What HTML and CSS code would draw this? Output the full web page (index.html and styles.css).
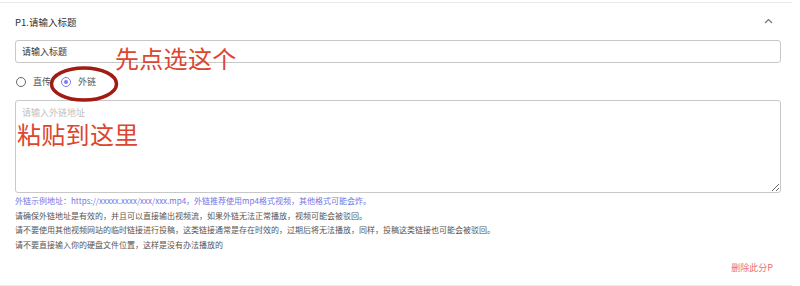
FILE: index.html
```html
<!DOCTYPE html>
<html lang="zh-CN">
<head>
<meta charset="utf-8">
<title>P1</title>
<link rel="stylesheet" href="styles.css">
</head>
<body>
<div class="panel">
  <div class="header">
    <span class="title">P1.请输入标题</span>
    <svg class="chevron" width="9" height="6" viewBox="0 0 9 6"><polyline points="1,5 4.5,1.5 8,5" fill="none" stroke="#777" stroke-width="1.2"/></svg>
  </div>
  <div class="body">
    <input class="field" type="text" value="请输入标题">
    <div class="radios">
      <label class="radio"><span class="dot"></span><span class="rlabel">直传</span></label>
      <label class="radio checked"><span class="dot"></span><span class="rlabel">外链</span></label>
    </div>
    <textarea class="area" placeholder="请输入外链地址"></textarea>
    <div class="help">
      <p class="tip">外链示例地址：https://xxxxx.xxxx/xxx/xxx.mp4，外链推荐使用mp4格式视频，其他格式可能会炸。</p>
      <p>请确保外链地址是有效的，并且可以直接输出视频流，如果外链无法正常播放，视频可能会被驳回。</p>
      <p>请不要使用其他视频网站的临时链接进行投稿，这类链接通常是存在时效的，过期后将无法播放，同样，投稿这类链接也可能会被驳回。</p>
      <p>请不要直接输入你的硬盘文件位置，这样是没有办法播放的</p>
    </div>
    <div class="footer"><span class="del">删除此分P</span></div>
  </div>
  <div class="note note1">先点选这个</div>
  <div class="note note2">粘贴到这里</div>
  <svg class="ring" width="72" height="40" viewBox="0 0 72 40"><ellipse cx="36" cy="20" rx="32.5" ry="16" fill="none" stroke="#a11b12" stroke-width="3.5"/></svg>
</div>
</body>
</html>
```
FILE: styles.css
```css
* { box-sizing: border-box; }
html, body { margin: 0; padding: 0; background: #fff; }
body {
  font-family: "Noto Sans CJK SC", "Noto Sans", sans-serif;
  color: #333;
  width: 800px;
  height: 286px;
  overflow: hidden;
}
.panel {
  position: relative;
  margin-top: 2px;
  width: 792px;
  border-top: 1px solid #ebebeb;
  border-bottom: 1px solid #ebebeb;
  padding-bottom: 3px;
}
.header {
  height: 37px;
  display: flex;
  align-items: center;
  justify-content: space-between;
  padding: 0 19px 0 15px;
}
.title { font-size: 9.5px; color: #333; }
.chevron { display: block; margin-top: -1px; }
.body { padding: 0 11px 0 15px; }
.field {
  display: block;
  width: 766px;
  height: 23px;
  border: 1px solid #c8c8c8;
  border-radius: 3px;
  padding: 0 6px;
  font: 9px "Noto Sans CJK SC", sans-serif;
  color: #333;
  outline: none;
}
.radios {
  height: 37px;
  display: flex;
  align-items: center;
  gap: 10px;
  padding-left: 1px;
}
.radio { display: flex; align-items: center; gap: 7px; font-size: 9px; color: #555; }
.dot {
  width: 10px; height: 10px;
  border: 1px solid #666;
  border-radius: 50%;
  display: flex; align-items: center; justify-content: center;
}
.checked .dot { border-color: #7e7ee6; }
.checked .dot::after {
  content: "";
  width: 4px; height: 4px;
  border-radius: 50%;
  background: #7e7ee6;
}
.area {
  display: block;
  width: 766px;
  height: 93px;
  border: 1px solid #c8c8c8;
  border-radius: 3px;
  padding: 5px 6px;
  font: 9px "Noto Sans CJK SC", sans-serif;
  resize: vertical;
  outline: none;
}
.area::placeholder { color: #c0c0c0; }
.help { margin-top: 1px; }
.help p {
  margin: 0;
  font-size: 8px;
  line-height: 14.5px;
  height: 14.5px;
  color: #555;
  white-space: nowrap;
}
.help p.tip { color: #7474e4; }
.footer {
  height: 30px;
  display: flex;
  align-items: center;
  justify-content: flex-end;
  padding-right: 8px;
}
.del { font-size: 9px; color: #f06c6c; }
.note {
  position: absolute;
  font-size: 24px;
  line-height: 1;
  color: #dc4631;
  letter-spacing: 0.3px;
}
.note1 { left: 115px; top: 43px; }
.note2 { left: 17px; top: 119px; }
.ring { position: absolute; left: 48px; top: 61px; }
```
